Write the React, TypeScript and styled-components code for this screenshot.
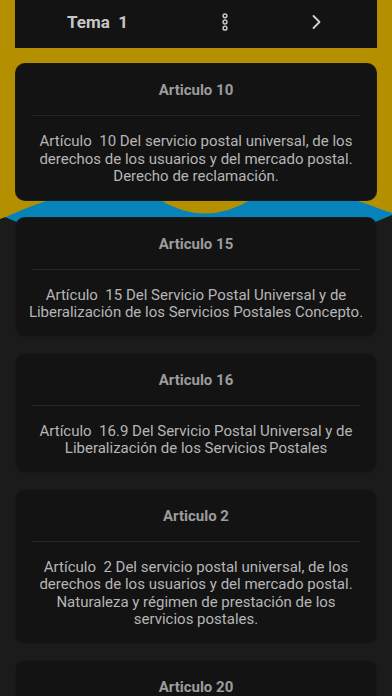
import React from "react";
import styled, { createGlobalStyle } from "styled-components";

const GlobalStyle = createGlobalStyle`
  html, body {
    margin: 0;
    padding: 0;
    background: #1b1b1b;
  }
  body {
    font-family: Roboto, "Liberation Sans", Arial, sans-serif;
    -webkit-font-smoothing: antialiased;
  }
  * { box-sizing: border-box; }
`;

const Page = styled.div`
  position: relative;
  width: 392px;
  min-height: 696px;
  background: #1b1b1b;
  overflow: hidden;
`;

const Backdrop = styled.svg`
  position: absolute;
  top: 0;
  left: 0;
  width: 392px;
  height: 300px;
  z-index: 0;
`;

const Content = styled.div`
  position: relative;
  z-index: 1;
  display: flex;
  flex-direction: column;
  padding: 0 15px 24px;
`;

const TopBar = styled.div`
  height: 48px;
  background: #131313;
  display: flex;
  align-items: center;
  padding: 0 49px 5px 52px;
  margin-bottom: 15px;
`;

const TopTitle = styled.div`
  flex: 1;
  font-size: 17px;
  font-weight: 700;
  color: #c6c6c6;
  white-space: pre;
`;

const IconBox = styled.div<{ $gap?: number }>`
  width: 24px;
  height: 24px;
  display: flex;
  align-items: center;
  justify-content: center;
  margin-left: ${(p) => p.$gap ?? 0}px;
`;

const List = styled.div`
  display: flex;
  flex-direction: column;
  gap: 16px;
`;

const Card = styled.div`
  background: #131313;
  box-shadow: inset 0 0 0 1px rgba(255, 255, 255, 0.025);
  border-radius: 10px;
  padding: 0 12px 15px;
`;

const CardTitle = styled.div`
  padding-top: 17px;
  line-height: 20px;
  font-size: 15px;
  font-weight: 700;
  color: #9c9c9c;
  text-align: center;
  margin-bottom: 15px;
`;

const Divider = styled.div`
  height: 1px;
  background: #252525;
  margin: 0 4px;
`;

const CardBody = styled.div`
  padding-top: 17px;
  font-size: 15px;
  line-height: 17.5px;
  color: #b6b6b6;
  text-align: center;
  white-space: pre-wrap;
`;

const items = [
  {
    title: "Articulo 10",
    body: "Artículo  10 Del servicio postal universal, de los derechos de los usuarios y del mercado postal. Derecho de reclamación.",
  },
  {
    title: "Articulo 15",
    body: "Artículo  15 Del Servicio Postal Universal y de Liberalización de los Servicios Postales Concepto.",
  },
  {
    title: "Articulo 16",
    body: "Artículo  16.9 Del Servicio Postal Universal y de Liberalización de los Servicios Postales",
  },
  {
    title: "Articulo 2",
    body: "Artículo  2 Del servicio postal universal, de los derechos de los usuarios y del mercado postal. Naturaleza y régimen de prestación de los servicios postales.",
  },
  {
    title: "Articulo 20",
    body: "Artículo  20 Del servicio postal universal, de los derechos de los usuarios y del mercado postal.",
  },
];

const DotsIcon = () => (
  <svg width="10" height="20" viewBox="0 0 10 20">
    <g fill="none" stroke="#c4c4c4" strokeWidth="1.5">
      <circle cx="5" cy="3.8" r="1.9" />
      <circle cx="5" cy="10" r="1.9" />
      <circle cx="5" cy="16.2" r="1.9" />
    </g>
  </svg>
);

const ChevronIcon = () => (
  <svg width="12" height="16" viewBox="0 0 12 16">
    <path d="M3.5 2 L9.5 8 L3.5 14" fill="none" stroke="#d2d2d2" strokeWidth="1.8" strokeLinecap="round" strokeLinejoin="round" />
  </svg>
);

export default function App() {
  return (
    <>
      <GlobalStyle />
      <Page>
        <Backdrop viewBox="0 0 392 300" aria-hidden="true">
          <path d="M0 0 H392 V215 Q196 300 0 215 Z" fill="#0583ba" />
          <path
            d="M0 0 H392 V213 C375 208 365 201 345 199 L252 199 Q205 228 158 199 L60 199 C40 200 20 212 0 219 Z"
            fill="#b48f00"
          />
        </Backdrop>
        <Content>
          <TopBar>
            <TopTitle>{"Tema  1"}</TopTitle>
            <IconBox>
              <DotsIcon />
            </IconBox>
            <IconBox $gap={67}>
              <ChevronIcon />
            </IconBox>
          </TopBar>
          <List>
            {items.map((it) => (
              <Card key={it.title}>
                <CardTitle>{it.title}</CardTitle>
                <Divider />
                <CardBody>{it.body}</CardBody>
              </Card>
            ))}
          </List>
        </Content>
      </Page>
    </>
  );
}
